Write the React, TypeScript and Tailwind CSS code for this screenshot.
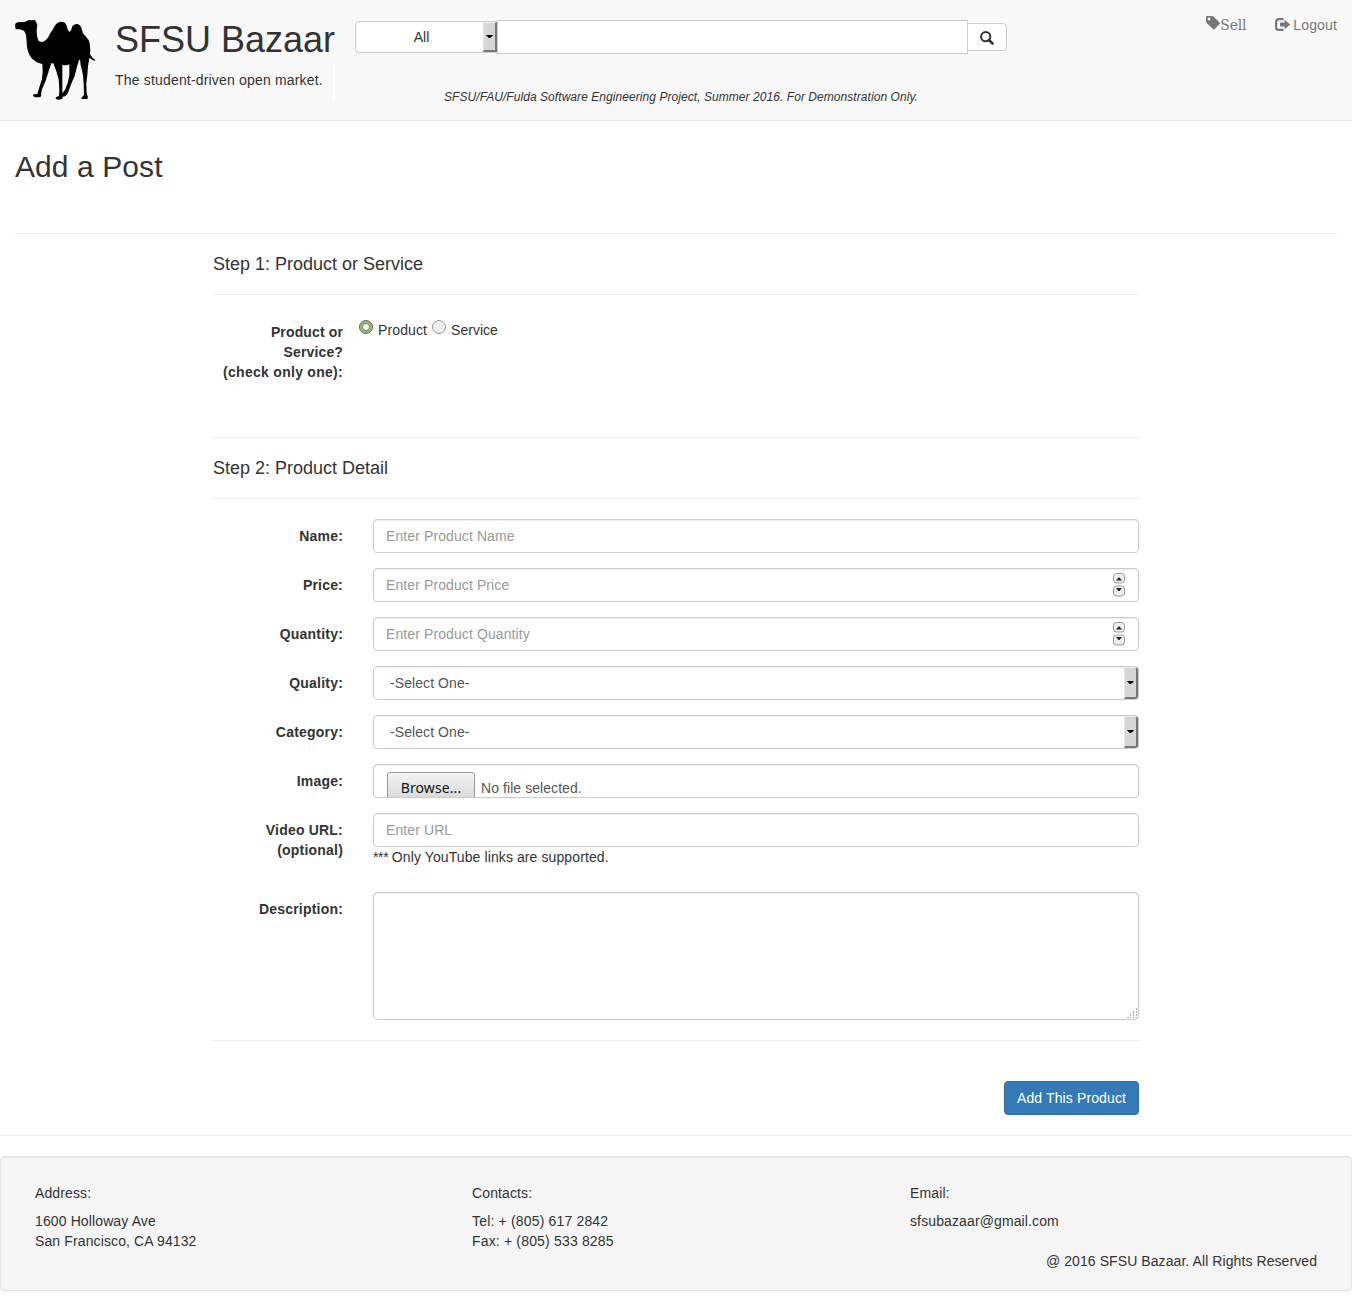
import type { ReactNode } from "react";

const field =
  "block h-[34px] w-full rounded-[4px] border border-[#ccc] bg-white px-3 text-[14px] leading-5 tracking-[0.1px] text-[#555] shadow-[inset_0_1px_1px_rgba(0,0,0,0.075)] outline-none placeholder:text-[#999] placeholder:opacity-100";

function Camel() {
  return (
    <svg className="block size-20 shrink-0" viewBox="45 60 240 240" aria-label="Camel">
      <path d="M45 76 Q46 68 53 67 L73 66 L80 63 L86 60 L93 61 L104 60 Q111 65 112 76 L110 90 Q110 112 116 123 L124 126 Q138 125 147 107 Q151 98 158 89 Q167 66 182 65 Q198 65 200 78 Q203 92 209 96 Q214 92 217 79 Q224 71 232 72 Q244 75 247 94 Q249 104 258 110 Q268 120 269 130 L271 151 L270 163 L278 174 L285 179 L283 183 L268 174 Q266 188 264 197 L262 225 L259 250 L260 281 L264 291 L262 297 L246 297 L244 293 L252 285 L251 250 Q250 228 246 211 L242 196 L240 179 L237 180 L231 200 L224 228 L212 256 L204 278 Q198 290 188 290 L187 297 L176 299 L168 297 L167 292 L177 288 L178 268 L176 238 L169 214 L160 190 L154 190 L146 214 L137 242 L126 268 L123 283 L124 288 L119 292 L104 292 L99 287 L101 283 L112 282 L118 262 L126 236 L128 216 L127 192 L114 188 Q97 181 89 166 Q80 148 80 125 L78 104 L72 92 L59 88 L47 88Z M187 194 L187 207 L187 236 L187 280 L196 268 L204 245 L208 225 L208 193 Q198 198 187 194Z" fillRule="evenodd" />
    </svg>
  );
}

function SelectArrow({ className }: { className: string }) {
  return (
    <span className={`flex items-center justify-center border-t border-r-2 border-b-2 border-l border-t-[#eee] border-r-[#777] border-b-[#777] border-l-[#e4e4e4] bg-[#d6d6d6] ${className}`}>
      <svg className="mt-px block h-[4px] w-[7px]" viewBox="0 0 7 4">
        <path d="M0.3 0H6.7V1H0.3Z M1.3 1H5.7V2H1.3Z M2.3 2H4.7V3H2.3Z" fill="#000" />
      </svg>
    </span>
  );
}

function Select() {
  return (
    <div className="flex h-[34px] rounded-[4px] border border-[#ccc] bg-white pl-4 text-[#555] shadow-[inset_0_1px_1px_rgba(0,0,0,0.075)]">
      <span className="flex-1 pt-[6px] tracking-[0.08px]">-Select One-</span>
      <SelectArrow className="h-8 w-[14px] rounded-r-[3px]" />
    </div>
  );
}

function Spinner() {
  return (
    <svg className="absolute top-[4px] right-[13px] h-[26px] w-[14px]" viewBox="0 0 14 26">
      <rect x="1.5" y="1.5" width="11" height="9.5" rx="3" fill="#eee" stroke="#999" />
      <rect x="1.5" y="14" width="11" height="10" rx="3" fill="#eee" stroke="#999" />
      <path d="M4 8.5L6.5 5.5H7.5L10 8.5Z M4 16H10L7.5 19H6.5Z" fill="#222" />
    </svg>
  );
}

function Row({ label, children }: { label: ReactNode; children: ReactNode }) {
  return (
    <div className="mb-[15px] flex">
      <div className="w-[130px] shrink-0 pt-[7px] text-right font-bold tracking-[0.2px]">{label}</div>
      <div className="relative ml-[30px] flex-1">{children}</div>
    </div>
  );
}

function StepTitle({ children }: { children: ReactNode }) {
  return <h4 className="border-b border-[#eee] pt-5 pb-5 text-[18px] leading-5">{children}</h4>;
}

export default function App() {
  return (
    <div className="h-[1311px] bg-white font-['Liberation_Sans',Arial,sans-serif] text-[14px] leading-5 text-[#333]">
      <header className="flex h-[121px] items-start border-b border-[#e7e7e7] bg-[#f8f8f8] px-[15px]">
        <div className="pt-5"><Camel /></div>
        <div className="ml-5 w-[220px] shrink-0 pt-5">
          <h1 className="text-[36px] leading-[40px] whitespace-nowrap">SFSU Bazaar</h1>
          <div className="mt-1 flex h-9 items-start justify-between border-r-2 border-white">
            <p className="mt-[6px] tracking-[0.18px] whitespace-nowrap">The student-driven open market.</p>
          </div>
        </div>
        <div className="ml-5 w-[652px] shrink-0 pt-5">
          <div className="flex h-[34px] items-center">
            <div className="-mt-px flex h-8 w-[142px] rounded-l-[4px] border border-r-0 border-[#ccc] bg-white">
              <span className="flex-1 pl-1 pt-[5px] text-center">All</span>
              <SelectArrow className="h-[30px] w-[14px]" />
            </div>
            <input className="h-[34px] w-[471px] border border-[#ccc] bg-white px-3 outline-none" aria-label="Search" />
            <button className="-ml-px flex h-7 w-10 items-center justify-center rounded-r-[4px] border border-[#ccc] bg-white" aria-label="Submit search">
              <svg className="mt-[2px] block size-[14px]" viewBox="0 0 14 14" fill="none" stroke="#333">
                <circle cx="5.7" cy="5.7" r="4.6" strokeWidth="2" />
                <path d="M9 9L12.6 12.6" strokeWidth="2.6" strokeLinecap="round" />
              </svg>
            </button>
          </div>
          <p className="mt-[33px] text-center text-[12px] tracking-[0.06px] italic">SFSU/FAU/Fulda Software Engineering Project, Summer 2016. For Demonstration Only.</p>
        </div>
        <nav className="ml-auto flex pt-[15px] text-[#777]">
          <a className="flex font-['DejaVu_Serif',serif]">
            <svg className="mt-px block size-[14px]" viewBox="0 0 14 14">
              <path d="M0 1Q0 0 1 0H6Q7 0 7.7.7L13.6 6.6Q14.3 7.3 13.6 8L8.5 13.3Q7.8 14 7.1 13.3L.7 7Q0 6.3 0 5.5Z M3 1.6A1.4 1.4 0 1 0 3 4.4A1.4 1.4 0 1 0 3 1.6Z" fill="#777" fillRule="evenodd" />
            </svg>
            <span className="tracking-[-0.2px]">Sell</span>
          </a>
          <a className="ml-[29px] flex tracking-[0.15px]">
            <svg className="mt-[3px] mr-[2px] block h-[13px] w-[16px]" viewBox="0 0 16 13">
              <path d="M8.5 1.1H4Q1.1 1.1 1.1 3.8V9.2Q1.1 11.9 4 11.9H8.5" fill="none" stroke="#777" strokeWidth="2.2" />
              <path d="M5 4.4H9.5V1.8L15.2 6.5L9.5 11.2V8.6H5Z" fill="#777" />
            </svg>
            Logout
          </a>
        </nav>
      </header>

      <div className="mx-[15px] h-[113px] border-b border-[#eee] pt-[29px]">
        <h2 className="text-[30px] leading-[33px] tracking-[0.08px]">Add a Post</h2>
      </div>

      <main className="mx-auto w-[926px]">
        <StepTitle>Step 1: Product or Service</StepTitle>
        <div className="flex h-[143px] border-b border-[#eee] pt-5">
          <div className="w-[130px] pt-[7px] text-right font-bold">
            <span className="tracking-[0.13px]">Product or<br />Service?</span><br /><span className="tracking-[0.28px]">(check only one):</span>
          </div>
          <div className="ml-4 flex h-5 items-start pt-[5px]">
            <span className="flex size-[14px] items-center justify-center rounded-full border border-[#666] bg-[#9aba7a]">
              <span className="size-[8px] rounded-full border border-[#70865c] bg-white" />
            </span>
            <span className="ml-[5px] tracking-[0.12px]">Product</span>
            <span className="ml-[5px] size-[14px] rounded-full border border-[#999] bg-[#f0f0f0]" />
            <span className="ml-[5px]">Service</span>
          </div>
        </div>

        <StepTitle>Step 2: Product Detail</StepTitle>
        <form className="h-[542px] border-b border-[#eee] pt-5">
          <Row label="Name:"><input className={field} placeholder="Enter Product Name" /></Row>
          <Row label="Price:"><input className={field} placeholder="Enter Product Price" /><Spinner /></Row>
          <Row label="Quantity:"><input className={field} placeholder="Enter Product Quantity" /><Spinner /></Row>
          <Row label="Quality:"><Select /></Row>
          <Row label="Category:"><Select /></Row>
          <Row label="Image:">
            <div className="flex h-[34px] items-start overflow-hidden rounded-[4px] border border-[#ccc] pt-[7px] pl-[13px] text-[#555] shadow-[inset_0_1px_1px_rgba(0,0,0,0.075)]">
              <span className="h-[34px] w-[88px] shrink-0 rounded-[3px] border border-[#999] bg-linear-to-b from-[#f4f4f4] to-[#d2d2d2] pt-[5px] text-center font-['Noto_Sans'] text-[14px] tracking-[0.1px] text-[#111]">Browse...</span>
              <span className="mt-[6px] ml-[6px] tracking-[0.07px]">No file selected.</span>
            </div>
          </Row>
          <div className="mb-[25px]">
            <Row label={<>Video URL:<br />(optional)</>}>
              <input className={field} placeholder="Enter URL" />
              <p className="tracking-[0.1px]"><span className="tracking-[-0.35px]">*** </span>Only YouTube links are supported.</p>
            </Row>
          </div>
          <Row label="Description:">
            <textarea className="block h-32 w-full resize-none rounded-[4px] border border-[#ccc] bg-white shadow-[inset_0_1px_1px_rgba(0,0,0,0.075)] outline-none" aria-label="Description" />
            <svg className="absolute right-[1px] bottom-[1px] size-[11px]" viewBox="0 0 11 11" fill="#aaa">
              <path d="M9 0h1v2H9z M6 3h1v2H6z M9 3h1v2H9z M3 6h1v2H3z M6 6h1v2H6z M9 6h1v2H9z M0 9h2v1H0z M3 9h1v1H3z M6 9h1v1H6z M9 9h1v1H9z" />
            </svg>
          </Row>
        </form>
        <div className="flex justify-end pt-10 pb-5">
          <button className="h-[34px] w-[135px] rounded-[4px] border border-[#2e6da4] bg-[#337ab7] tracking-[0.12px] text-white">Add This Product</button>
        </div>
      </main>

      <footer className="border-t border-[#eee] pt-5">
        <div className="h-[135px] rounded-[4px] border border-[#e3e3e3] bg-[#f5f5f5] px-[34px] pt-[26px] tracking-[0.12px] shadow-[inset_0_1px_1px_rgba(0,0,0,0.05)]">
          <div className="grid grid-cols-[437px_438px_1fr]">
            <div><p className="mb-2">Address:</p><p>1600 Holloway Ave<br />San Francisco, CA 94132</p></div>
            <div><p className="mb-2">Contacts:</p><p className="tracking-[0.17px]">Tel: + (805) 617 2842<br />Fax: + (805) 533 8285</p></div>
            <div><p className="mb-2">Email:</p><p>sfsubazaar@gmail.com</p></div>
          </div>
          <p className="text-right tracking-[0.08px]">@ 2016 SFSU Bazaar. All Rights Reserved</p>
        </div>
      </footer>
    </div>
  );
}
